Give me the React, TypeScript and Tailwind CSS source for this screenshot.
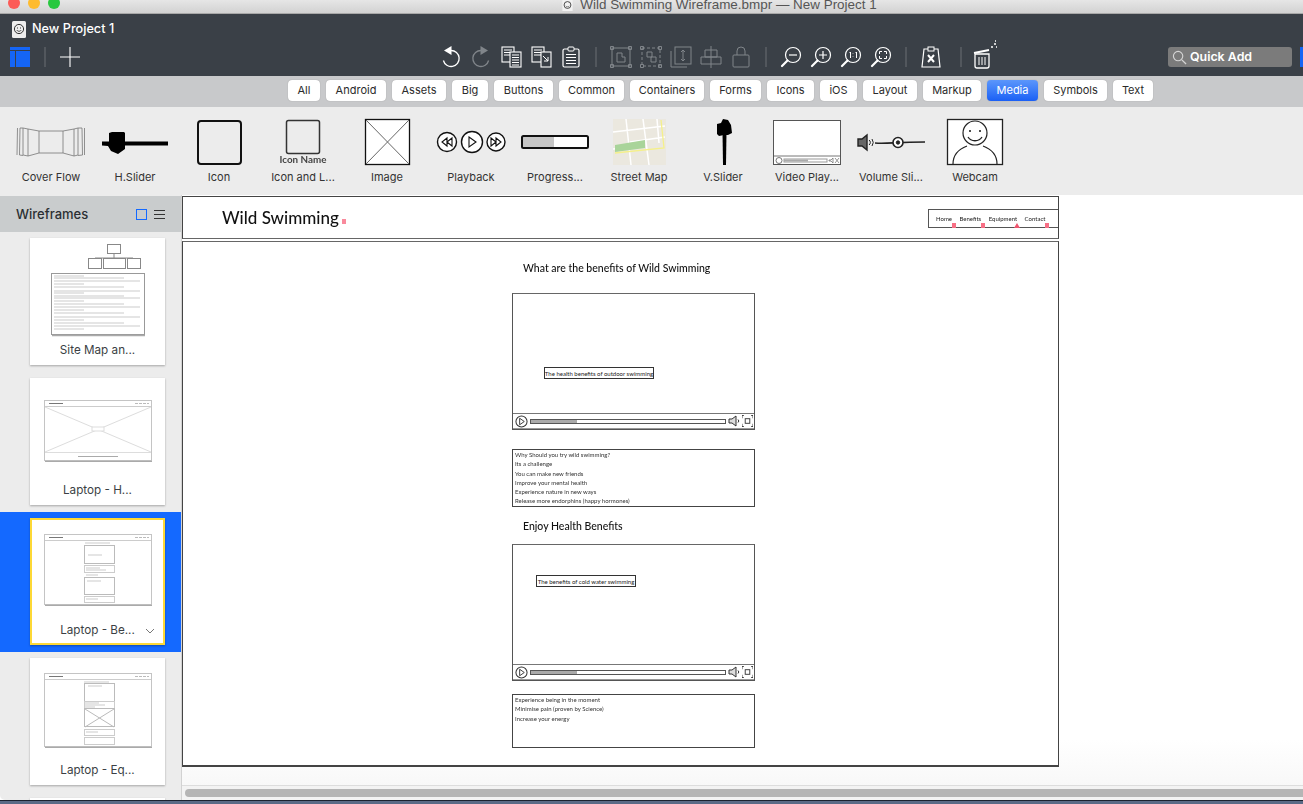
import type { ReactNode } from "react";

const FILTERS = [
  { label: "All", w: "w-[32px]" },
  { label: "Android", w: "w-[60px]" },
  { label: "Assets", w: "w-[54px]" },
  { label: "Big", w: "w-[36px]" },
  { label: "Buttons", w: "w-[59px]" },
  { label: "Common", w: "w-[65px]" },
  { label: "Containers", w: "w-[74px]" },
  { label: "Forms", w: "w-[51px]" },
  { label: "Icons", w: "w-[47px]" },
  { label: "iOS", w: "w-[37px]" },
  { label: "Layout", w: "w-[54px]" },
  { label: "Markup", w: "w-[58px]" },
  { label: "Media", w: "w-[51px]" },
  { label: "Symbols", w: "w-[63px]" },
  { label: "Text", w: "w-[40px]" },
];

const WIRE_FONT = "font-['Lato',sans-serif]";
const ON = "#ffffff";
const OFF = "#80858a";

function Tool({ children, vb = "0 0 30 26" }: { children: ReactNode; vb?: string }) {
  return (
    <svg viewBox={vb} className="h-[26px] w-[30px] shrink-0" fill="none">
      {children}
    </svg>
  );
}

function Sep({ className = "" }: { className?: string }) {
  return (
    <div className={"flex w-[20px] shrink-0 justify-center " + className}>
      <div className="h-[20px] w-[2px] bg-[#52575d]" />
    </div>
  );
}

function Doc({ x, y, w, h, lines = 3 }: { x: number; y: number; w: number; h: number; lines?: number }) {
  return (
    <g>
      <rect x={x} y={y} width={w} height={h} fill="#3a4047" stroke={ON} strokeWidth="1.1" />
      {Array.from({ length: lines }).map((_, i) => (
        <path key={i} d={`M${x + 2} ${y + 3 + i * 2.5}h${w - 4}`} stroke={ON} />
      ))}
    </g>
  );
}

function Lens({ children }: { children?: ReactNode }) {
  return (
    <Tool>
      <circle cx="17" cy="11" r="7.5" stroke={ON} strokeWidth="1.2" />
      <path d="M11.5 16.5 6 22" stroke={ON} strokeWidth="2.2" strokeLinecap="round" />
      {children}
    </Tool>
  );
}

function Toolbar() {
  return (
    <div className="h-[62px] shrink-0 bg-[#3a4047] text-white">
      <div className="flex h-[30px] items-center pl-[12px]">
        <svg viewBox="0 0 14 17" className="h-[17px] w-[14px]">
          <rect width="14" height="17" rx="1.5" fill="#eeeeee" />
          <circle cx="7" cy="8" r="4.6" fill="none" stroke="#333" strokeWidth="1" />
          <path d="M4.7 9c1 1.8 3.6 1.8 4.6 0" fill="none" stroke="#333" strokeWidth=".8" />
          <path d="M5.5 6.5v1M8.5 6.5v1" stroke="#333" />
        </svg>
        <span className="ml-[6px] font-['Inter',sans-serif] text-[12.7px] font-medium">New Project 1</span>
      </div>
      <div className="flex h-[26px] items-center">
        <div className="ml-[10px] flex h-[20px] w-[20px] shrink-0 flex-col gap-[1px]">
          <div className="h-[3px] bg-[#1565f5]" />
          <div className="flex flex-1 gap-[1px]">
            <div className="w-[5px] bg-[#1565f5]" />
            <div className="flex-1 bg-[#1565f5]" />
          </div>
        </div>
        <div className="ml-[14px] h-[20px] w-[2px] shrink-0 bg-[#52575d]" />
        <svg viewBox="0 0 20 20" className="ml-[14px] mr-[356px] h-[20px] w-[20px] shrink-0">
          <path d="M10 0v20M0 10h20" stroke="#fff" strokeWidth="1.1" />
        </svg>

        {/* undo / redo */}
        <Tool>
          <path d="M15 6.5a8 8 0 1 1-7.6 10" stroke={ON} strokeWidth="1.3" />
          <path d="M15.5 2 8 6.5l7.5 4.5z" fill={ON} />
        </Tool>
        <Tool>
          <path d="M15 6.5a8 8 0 1 0 7.6 10" stroke={OFF} strokeWidth="1.3" />
          <path d="M14.5 2 22 6.5l-7.5 4.5z" fill={OFF} />
        </Tool>
        <Tool>
          <Doc x={6} y={3} w={12} h={15} />
          <Doc x={14} y={8} w={11} h={15} lines={5} />
        </Tool>
        <Tool>
          <Doc x={6} y={3} w={12} h={15} />
          <rect x="15" y="8" width="10" height="15" fill="#3a4047" stroke={ON} strokeWidth="1.1" />
          <path d="M17 12l5 5m0-4v4h-4" stroke={ON} />
        </Tool>
        <Tool>
          <rect x="7" y="5" width="16" height="18" rx="1.5" stroke={ON} strokeWidth="1.2" />
          <rect x="12" y="3" width="6" height="4" rx="1" fill="#3a4047" stroke={ON} />
          <path d="M10 10.5h10M10 13.5h10M10 16.5h10M10 19.5h10" stroke={ON} />
        </Tool>
        <Sep />

        {/* group / arrange, disabled */}
        <Tool>
          <rect x="6" y="4" width="18" height="18" stroke={OFF} />
          <path d="M11 9h5v4h3v5h-8z" stroke={OFF} />
          <path d="M4.5 2.5h3v3h-3zM22.5 2.5h3v3h-3zM4.5 20.5h3v3h-3zM22.5 20.5h3v3h-3z" stroke={OFF} />
        </Tool>
        <Tool>
          <rect x="6" y="4" width="18" height="18" stroke={OFF} strokeDasharray="3 2" />
          <path d="M11 8h5v5h-5zM15 13h5v5h-5z" stroke={OFF} />
          <path d="M4.5 2.5h3v3h-3zM22.5 2.5h3v3h-3zM4.5 20.5h3v3h-3zM22.5 20.5h3v3h-3z" stroke={OFF} />
        </Tool>
        <Tool>
          <rect x="9" y="3" width="16" height="17" stroke={OFF} />
          <path d="M5 7v16h16M17 6v11M15 8l2-2 2 2M15 15l2 2 2-2" stroke={OFF} />
        </Tool>
        <Tool>
          <path d="M15 2v22M9 6h12v7H9zM5 13h20v7H5z" stroke={OFF} />
        </Tool>
        <Tool>
          <rect x="7" y="11" width="16" height="12" rx="1" stroke={OFF} />
          <path d="M11 11V7a4 4 0 0 1 8 0v4" stroke={OFF} />
        </Tool>
        <Sep />

        {/* zoom */}
        <Lens>
          <path d="M13 11h8" stroke={ON} strokeWidth="1.2" />
        </Lens>
        <Lens>
          <path d="M13 11h8M17 7v8" stroke={ON} strokeWidth="1.2" />
        </Lens>
        <Lens>
          <path d="M13.5 9l1-1v6M19.5 9l1-1v6M17 9.5v.5M17 12.5v.5" stroke={ON} />
        </Lens>
        <Lens>
          <path d="M13.5 10V7.5H16M18 7.5h2.5V10M20.5 12v2.5H18M16 14.5h-2.5V12" stroke={ON} />
        </Lens>
        <Sep />

        <Tool>
          <path d="M8 5h14l2 18H6z" stroke={ON} strokeWidth="1.2" />
          <rect x="12" y="3" width="6" height="4" fill="#3a4047" stroke={ON} />
          <path d="M12 11l6 7M18 11l-6 7" stroke={ON} strokeWidth="2" />
        </Tool>
        <Sep className="ml-[5px]" />
        <svg viewBox="0 0 30 30" className="mt-[-4px] h-[30px] w-[30px] shrink-0" fill="none">
          <path d="M3 13l15-3" stroke={ON} strokeWidth="2" />
          <path d="M4 14h14v12a2 2 0 0 1-2 2H6a2 2 0 0 1-2-2z" stroke={ON} strokeWidth="1.3" />
          <path d="M8 17v8M11 17v8M14 17v8" stroke={ON} />
          <path d="M20 7h2M23 4h2M25 7h1M24 1h1" stroke={ON} strokeWidth="1.4" />
        </svg>

        <div className="ml-[167px] flex h-[20px] w-[124px] shrink-0 items-center rounded-[3px] bg-[#7b7b7b] pl-[4px]">
          <svg viewBox="0 0 16 16" className="h-[15px] w-[15px]" fill="none">
            <circle cx="6.5" cy="6.5" r="5" stroke="#d5d5d5" strokeWidth="1.2" />
            <path d="M10.5 10.5 15 15" stroke="#d5d5d5" strokeWidth="1.4" />
          </svg>
          <span className="ml-[3px] font-['Inter',sans-serif] text-[12.4px] font-semibold">Quick Add</span>
        </div>
        <div className="ml-[8px] h-[20px] flex-1 bg-[#1565f5]" />
      </div>
    </div>
  );
}

function FilterBar() {
  return (
    <div className="flex h-[31px] shrink-0 gap-[6px] bg-[#c8c9cb] pl-[288px] pt-[4px] font-['Inter',sans-serif]">
      {FILTERS.map((f) => (
        <div
          key={f.label}
          className={
            f.w +
            " flex h-[21px] items-center justify-center rounded-[4px] text-[11px] shadow-[0_0_1px_#8a8a8a] " +
            (f.label === "Media"
              ? "bg-gradient-to-b from-[#5b96fb] to-[#1a5ff5] text-white"
              : "bg-white text-[#2b2b2b]")
          }
        >
          {f.label}
        </div>
      ))}
    </div>
  );
}

const LIBRARY: { label: string; art: ReactNode }[] = [
  {
    label: "Cover Flow",
    art: (
      <g fill="none" stroke="#777" strokeWidth=".8">
        <path d="M30 13h24v22H30zM30 13l-11-2v27l11-3M54 13l11-2v27l-11-3" />
        <path d="M19 11l-5-1v27l5 1M14 10h-3l-.5 27 3.500.500M65 11l4-1v27l-4 1M69 10h4l.5 27-4.500.500M8.500 10l-.5 27M75.500 10v27" />
      </g>
    ),
  },
  {
    label: "H.Slider",
    art: (
      <g fill="#000">
        <path d="M9 23.500h66v4H9z" />
        <path d="M16 15l3-1h12l1 1v16l-7 5-7-3-3-5-6-1v-3h7z" />
      </g>
    ),
  },
  {
    label: "Icon",
    art: <rect x="21" y="3" width="43" height="43" rx="3" fill="none" stroke="#111" strokeWidth="2" />,
  },
  {
    label: "Icon and L...",
    art: (
      <g>
        <rect x="25.500" y="2.500" width="33" height="33" rx="2" fill="none" stroke="#333" strokeWidth="1.500" />
        <text x="42" y="45" textAnchor="middle" fontFamily="Lato, sans-serif" fontSize="9.800" fontWeight="700" fill="#444">
          Icon Name
        </text>
      </g>
    ),
  },
  {
    label: "Image",
    art: (
      <g>
        <rect x="20.500" y="1.500" width="44" height="45" fill="#fff" stroke="#111" strokeWidth="1.300" />
        <path d="M21 2l43 44M64 2 21 46" stroke="#666" strokeWidth="1" />
      </g>
    ),
  },
  {
    label: "Playback",
    art: (
      <g fill="#fff" stroke="#111" strokeWidth="1.400">
        <circle cx="18" cy="24" r="9.500" />
        <circle cx="43" cy="24" r="10.500" />
        <circle cx="67" cy="24" r="9" />
        <path d="M18 20l-5 4 5 4zM23 20l-5 4 5 4zM40 19l7 5-7 5zM62 20l5 4-5 4zM67 20l5 4-5 4z" fill="none" strokeWidth="1.100" />
      </g>
    ),
  },
  {
    label: "Progress...",
    art: (
      <g>
        <rect x="9" y="18" width="66" height="12" rx="1.500" fill="#fff" />
        <rect x="9" y="18" width="32" height="12" fill="#c6c6c6" />
        <rect x="9" y="18" width="66" height="12" rx="1.500" fill="none" stroke="#111" strokeWidth="2" />
      </g>
    ),
  },
  {
    label: "Street Map",
    art: (
      <g>
        <rect x="16" y="1" width="53" height="46" fill="#ebe8df" />
        <path d="M29 1l5 46M46 1l6 46M60 1l2 24M16 14 68 8M33 24l35-5M16 31l12-1" stroke="#fff" strokeWidth="1.500" fill="none" />
        <path d="M18 27l30-5v8l-30 4z" fill="#a9d49a" />
        <path d="M18 35l49-5-3-28" stroke="#f5f08a" strokeWidth="1.300" fill="none" />
      </g>
    ),
  },
  {
    label: "V.Slider",
    art: (
      <g fill="#000">
        <path d="M41.500 14h4l-.5 33h-3z" />
        <path d="M36 6l4-1 2-4 5 1 3 5 1 8-2 1-2 1h-4l-5 1-2-2z" />
      </g>
    ),
  },
  {
    label: "Video Play...",
    art: (
      <g fill="none">
        <rect x="8.500" y="2.500" width="67" height="44" fill="#fff" stroke="#555" />
        <path d="M9 38h66" stroke="#777" />
        <circle cx="14" cy="42.500" r="3" stroke="#777" />
        <rect x="19" y="41" width="43" height="3" stroke="#999" />
        <path d="M19 42.500h24" stroke="#aaa" strokeWidth="2" />
        <path d="M64 42h2l2-2v5l-2-2h-2zM70 40l4 5M74 40l-4 5" stroke="#777" strokeWidth=".8" />
      </g>
    ),
  },
  {
    label: "Volume Sli...",
    art: (
      <g fill="none" stroke="#222">
        <path d="M9 21h4l5-4v15l-5-4H9z" fill="#666" strokeWidth="1.400" />
        <path d="M20 22a3 3 0 0 1 0 5M23 21a6 6 0 0 1 0 7" />
        <path d="M26 25c12 1 20-1 50-1" strokeWidth="1.600" />
        <circle cx="49" cy="24.500" r="5" fill="#fff" strokeWidth="1.600" />
        <circle cx="49" cy="24.500" r="1.700" fill="#222" />
      </g>
    ),
  },
  {
    label: "Webcam",
    art: (
      <g fill="none" stroke="#222">
        <rect x="14.500" y="1.500" width="55" height="45" fill="#fff" strokeWidth="1.300" />
        <circle cx="42" cy="15" r="12" strokeWidth="1.200" />
        <path d="M37 12v2M47 12v2" strokeWidth="1.600" />
        <path d="M35 19c3 5 11 5 14 0" strokeWidth="1.300" />
        <path d="M20 46c0-9 6-15 14-18M64 46c0-9-6-15-14-18" strokeWidth="1.200" />
      </g>
    ),
  },
];

function Library() {
  return (
    <div className="flex h-[88px] shrink-0 bg-[#ececec] pl-[9px] pt-[11px] font-['Inter',sans-serif]">
      {LIBRARY.map((item) => (
        <div key={item.label} className="flex w-[84px] shrink-0 flex-col items-center">
          <svg viewBox="0 0 84 48" className="h-[48px] w-[84px] blur-[0.3px]">
            {item.art}
          </svg>
          <span className="mt-[4px] text-[11px] leading-[14px] text-[#333]">{item.label}</span>
        </div>
      ))}
    </div>
  );
}

function ThumbFrame({ h, children }: { h: number; children: ReactNode }) {
  return (
    <g>
      <rect x="0.500" y="0.500" width="107" height={h} fill="#fff" stroke="#c4c4c4" />
      <path d={`M1 ${h + 1.5}h107`} stroke="#aaa" strokeWidth="1.500" />
      <path d="M1 6.500h106" stroke="#ccc" />
      <path d="M5 3.500h14" stroke="#777" strokeWidth="1" />
      <path d="M91 3.500h14" stroke="#bbb" strokeWidth="1" strokeDasharray="3 1" />
      {children}
    </g>
  );
}

function ThumbText({ x, y, w }: { x: number; y: number; w: number }) {
  return <path d={`M${x} ${y}h${w}`} stroke="#aaa" strokeWidth=".6" />;
}

function SiteMapThumb() {
  const rows = [3, 5, 8, 11, 14, 18, 20, 23, 25, 28, 31, 34, 37, 40, 44, 47, 50, 53, 56];
  return (
    <svg viewBox="0 0 135 100" className="absolute left-0 top-0 h-[100px] w-[135px] blur-[0.4px]" fill="none">
      <g stroke="#888" fill="#fff">
        <rect x="77.500" y="6.500" width="13" height="9" />
        <path d="M84 15v5M65 24v-4h38v4" fill="none" />
        <rect x="58.500" y="20.500" width="13" height="10" />
        <rect x="73.500" y="20.500" width="22" height="10" />
        <rect x="97.500" y="20.500" width="13" height="10" />
      </g>
      <g transform="translate(21 35)">
        <rect x="0.500" y="0.500" width="93" height="61" fill="#fff" stroke="#999" />
        <path d="M1 62.500h93" stroke="#aaa" strokeWidth="1.500" />
        {rows.map((y, i) => (
          <path key={y} d={`M3 ${y}h${i % 3 === 0 ? 30 : i % 3 === 1 ? 70 : 86}`} stroke="#aaa" strokeWidth=".6" />
        ))}
      </g>
    </svg>
  );
}

function HomeThumb() {
  return (
    <svg viewBox="0 0 108 62" className="absolute left-[14px] top-[22px] h-[62px] w-[108px] blur-[0.4px]" fill="none">
      <ThumbFrame h={60}>
        <path d="M1 52.500h106M1 7 107 52M107 7 1 52" stroke="#ddd" />
        <rect x="48" y="27" width="12" height="4" fill="#fff" stroke="#ddd" />
        <path d="M34 56.500h40" stroke="#aaa" />
      </ThumbFrame>
    </svg>
  );
}

function BenefitsThumb() {
  return (
    <svg viewBox="0 0 108 72" className="absolute left-[14px] top-[16px] h-[72px] w-[108px] blur-[0.4px]" fill="none">
      <ThumbFrame h={70}>
        <ThumbText x={41} y={9} w={25} />
        <rect x="40.500" y="11.500" width="30" height="18" stroke="#bbb" />
        <ThumbText x={44} y={21} w={14} />
        <rect x="40.500" y="31.500" width="30" height="7" stroke="#ccc" />
        <ThumbText x={42} y={34} w={14} />
        <ThumbText x={42} y={36} w={20} />
        <ThumbText x={42} y={41} w={12} />
        <rect x="40.500" y="43.500" width="30" height="17" stroke="#bbb" />
        <ThumbText x={43} y={47} w={14} />
        <rect x="40.500" y="62.500" width="30" height="6" stroke="#ccc" />
        <ThumbText x={42} y={65} w={12} />
      </ThumbFrame>
    </svg>
  );
}

function EquipmentThumb() {
  return (
    <svg viewBox="0 0 108 75" className="absolute left-[14px] top-[15px] h-[75px] w-[108px] blur-[0.4px]" fill="none">
      <ThumbFrame h={73}>
        <ThumbText x={40} y={9} w={25} />
        <rect x="40.500" y="10.500" width="30" height="18" stroke="#bbb" />
        <ThumbText x={44} y={13} w={14} />
        <rect x="40.500" y="28.500" width="30" height="7" stroke="#ccc" />
        <ThumbText x={41} y={30} w={14} />
        <ThumbText x={41} y={32} w={20} />
        <ThumbText x={41} y={34} w={10} />
        <rect x="40.500" y="35.500" width="30" height="18" stroke="#bbb" />
        <path d="M41 36 70 54M70 36 41 54" stroke="#bbb" />
        <rect x="40.500" y="56.500" width="30" height="6" stroke="#ccc" />
        <ThumbText x={42} y={59} w={12} />
        <rect x="40.500" y="64.500" width="30" height="7" stroke="#ccc" />
      </ThumbFrame>
    </svg>
  );
}

function Card({ label, thumb, selected }: { label: string; thumb: ReactNode; selected?: boolean }) {
  return (
    <div
      className={
        "relative ml-[30px] h-[127px] w-[135px] shrink-0 bg-white shadow-[0_1px_2px_rgba(0,0,0,0.3)] " +
        (selected ? "outline-2 -outline-offset-2 outline-[#fdd835]" : "")
      }
    >
      {thumb}
      <div className="absolute bottom-[7px] left-0 right-0 text-center font-['Inter',sans-serif] text-[11.7px] leading-[16px] text-[#3b3f44]">
        {label}
      </div>
      {selected && (
        <svg viewBox="0 0 10 6" className="absolute bottom-[11px] right-[10px] h-[6px] w-[10px]" fill="none">
          <path d="M1 1l4 4 4-4" stroke="#777" />
        </svg>
      )}
    </div>
  );
}

function Sidebar() {
  return (
    <div className="flex w-[182px] shrink-0 flex-col overflow-hidden rounded-bl-[5px] border-r border-[#d2d2d2] bg-[#ececec]">
      <div className="mt-[1px] flex h-[36px] shrink-0 items-center bg-[#c9cccd] pl-[16px] pr-[16px] pt-[1px]">
        <span className="font-['Inter',sans-serif] text-[13px] font-medium text-[#2b2f33]">Wireframes</span>
        <div className="ml-auto h-[11px] w-[11px] border-[1.5px] border-[#1469ff]" />
        <div className="ml-[7px] flex w-[11px] flex-col gap-[3px]">
          <div className="h-[1px] bg-[#333]" />
          <div className="h-[1px] bg-[#333]" />
          <div className="h-[1px] bg-[#333]" />
        </div>
      </div>
      <div className="flex flex-col pt-[6px]">
        <Card label="Site Map an..." thumb={<SiteMapThumb />} />
        <div className="mt-[13px]">
          <Card label="Laptop - H..." thumb={<HomeThumb />} />
        </div>
        <div className="mt-[7px] bg-[#1469ff] py-[6px] pb-[7px]">
          <Card label="Laptop - Be..." thumb={<BenefitsThumb />} selected />
        </div>
        <div className="mt-[6px]">
          <Card label="Laptop - Eq..." thumb={<EquipmentThumb />} />
        </div>
        <div className="mt-[13px]">
          <Card label="" thumb={null} />
        </div>
      </div>
    </div>
  );
}

function Marker({ triangle }: { triangle?: boolean }) {
  return triangle ? (
    <svg viewBox="0 0 6 5" className="absolute right-[-3px] top-[9px] h-[5px] w-[6px]">
      <path d="M3 0l3 5H0z" fill="#f0566f" />
    </svg>
  ) : (
    <div className="absolute right-[-4px] top-[9px] h-[5px] w-[4px] bg-[#f76f85]" />
  );
}

function NavLink({ label, triangle }: { label: string; triangle?: boolean }) {
  return (
    <span className="relative text-[6px] leading-[10px] text-[#222]">
      {label}
      <Marker triangle={triangle} />
    </span>
  );
}

function VideoPlayer({ children }: { children: ReactNode }) {
  return (
    <div className="relative flex h-[137px] shrink-0 flex-col border border-[#555] border-t-[#666] bg-white">
      <div className="flex-1" />
      <div className="flex h-[16px] shrink-0 items-center border-y border-t-[#777] border-b-[#999] pl-[2px] pr-[2px]">
        <svg viewBox="0 0 14 14" className="h-[13px] w-[13px] shrink-0" fill="none">
          <circle cx="7" cy="7" r="6" stroke="#333" strokeWidth="1.100" />
          <path d="M5 3.500 10 7l-5 3.500z" stroke="#333" />
        </svg>
        <div className="ml-[2px] h-[5px] w-[196px] shrink-0 border border-[#555]">
          <div className="h-full w-[46px] bg-[#aaa]" />
        </div>
        <svg viewBox="0 0 13 12" className="ml-[2px] h-[12px] w-[13px] shrink-0" fill="none">
          <path d="M1 4h3l4-3v10L4 8H1z" fill="#ddd" stroke="#333" />
          <path d="M10 4.500a2 2 0 0 1 0 3" stroke="#333" />
        </svg>
        <svg viewBox="0 0 12 12" className="ml-[1px] h-[12px] w-[11px] shrink-0" fill="none">
          <rect x="3.500" y="3.500" width="5" height="5" stroke="#333" />
          <path d="M0 3V0h2M10 0h2v3M12 9v3h-2M2 12H0V9" stroke="#333" />
        </svg>
      </div>
      {children}
    </div>
  );
}

function Callout({ className, text }: { className: string; text: string }) {
  return (
    <div
      className={
        "absolute flex h-[12px] items-center justify-center whitespace-nowrap border border-[#333] bg-white text-[6px] text-[#222] " +
        className
      }
    >
      {text}
    </div>
  );
}

function TextBlock({ className, lines }: { className: string; lines: string[] }) {
  return (
    <div className={"shrink-0 border border-[#444] bg-white pl-[2px] " + className}>
      {lines.map((l) => (
        <div key={l} className="h-[9.3px] whitespace-nowrap text-[6px] leading-[9.3px] text-[#333]">
          {l}
        </div>
      ))}
    </div>
  );
}

function Canvas() {
  return (
    <div className="flex min-w-0 flex-1 flex-col bg-gradient-to-b from-white from-[90%] to-[#f6f6f6]">
      <div className={"h-[590px] shrink-0 pt-[1px] blur-[0.35px] " + WIRE_FONT}>
        <div className="flex h-[43px] w-[877px] items-center border border-[#444] border-b-[#666] bg-white pl-[39px]">
          <span className="relative whitespace-nowrap text-[17px] font-medium leading-[20px] text-[#111]">
            Wild Swimming
            <div className="absolute right-[-7px] top-[11px] h-[5px] w-[4px] bg-[#f98a9c]" />
          </span>
          <div className="ml-auto mt-[2px] flex h-[19px] w-[130px] items-center gap-[7.5px] border border-r-0 border-[#555] pl-[7px]">
            <NavLink label="Home" />
            <NavLink label="Benefits" />
            <NavLink label="Equipment" triangle />
            <NavLink label="Contact" />
          </div>
        </div>
        <div className="mt-[2px] flex h-[526px] w-[877px] flex-col border border-b-2 border-[#444] border-t-[#666] bg-white pl-[329px] pt-[19px]">
          <div className="h-[14px] w-[243px] whitespace-nowrap pl-[11px] text-[10.5px] font-medium leading-[14px] text-[#111]">
            What are the benefits of Wild Swimming
          </div>
          <div className="mt-[18px] w-[243px]">
            <VideoPlayer>
              <Callout className="left-[31px] top-[73px] w-[110px]" text="The health benefits of outdoor swimming" />
            </VideoPlayer>
          </div>
          <TextBlock
            className="mt-[19px] h-[58px] w-[243px]"
            lines={[
              "Why Should you try wild swimming?",
              "Its a challenge",
              "You can make new friends",
              "Improve your mental health",
              "Experience nature in new ways",
              "Release more endorphins (happy hormones)",
            ]}
          />
          <div className="mt-[12px] h-[14px] w-[243px] whitespace-nowrap pl-[11px] text-[10.5px] font-medium leading-[14px] text-[#111]">
            Enjoy Health Benefits
          </div>
          <div className="mt-[11px] w-[243px]">
            <VideoPlayer>
              <Callout className="left-[23px] top-[30px] w-[100px]" text="The benefits of cold water swimming" />
            </VideoPlayer>
          </div>
          <TextBlock
            className="mt-[13px] h-[54px] w-[243px]"
            lines={["Experience being in the moment", "Minimise pain (proven by Science)", "Increase your energy"]}
          />
        </div>
      </div>
      <div className="flex h-[15px] shrink-0 items-center border-t border-[#dddddd] bg-[#f3f3f3] pl-[3px]">
        <div className="h-[8px] flex-1 rounded-l-full bg-[#b5b5b5]" />
      </div>
    </div>
  );
}

export default function App() {
  return (
    <div className="flex h-[804px] w-[1303px] flex-col overflow-hidden bg-white">
      <div className="relative flex h-[14px] shrink-0 items-center overflow-hidden border-b border-[#a8a8a8] bg-gradient-to-b from-[#e6e6e6] to-[#d2d2d2]">
        <div className="absolute left-[8px] top-[-3px] flex gap-[8px]">
          <div className="h-[12px] w-[12px] rounded-full bg-[#fc5b57]" />
          <div className="h-[12px] w-[12px] rounded-full bg-[#febb2e]" />
          <div className="h-[12px] w-[12px] rounded-full bg-[#28c83f]" />
        </div>
        <div className="-mt-[3px] flex w-full items-center justify-center pl-[136px] font-['Liberation_Sans',sans-serif] text-[13.45px] text-[#555]">
          <svg viewBox="0 0 12 14" className="mr-[7px] h-[12px] w-[11px]">
            <rect width="12" height="14" fill="#f2f2f2" />
            <circle cx="6" cy="7" r="4" fill="none" stroke="#333" />
            <path d="M4 8c1 1.500 3 1.500 4 0" fill="none" stroke="#333" strokeWidth=".7" />
          </svg>
          Wild Swimming Wireframe.bmpr — New Project 1
        </div>
      </div>
      <Toolbar />
      <FilterBar />
      <Library />
      <div className="flex h-[605px] shrink-0 overflow-hidden">
        <Sidebar />
        <Canvas />
      </div>
      <div className="h-[4px] shrink-0 border-t border-[#1b2330] bg-[#5a6a86]" />
    </div>
  );
}
